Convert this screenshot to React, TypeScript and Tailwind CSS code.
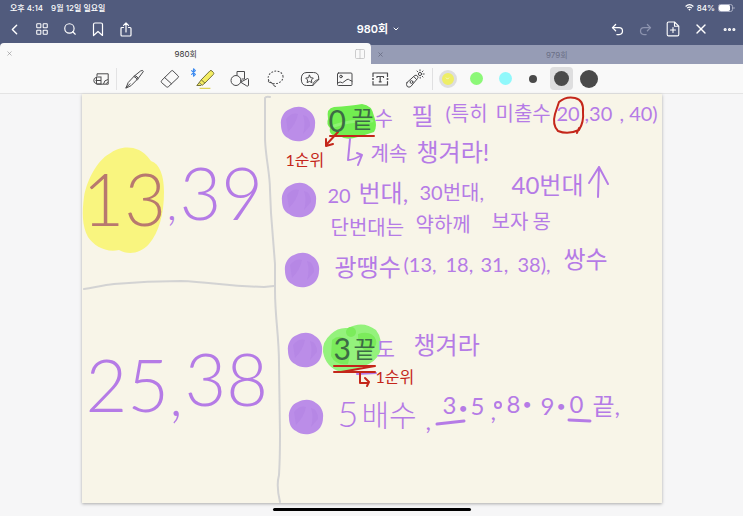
import type { ReactNode } from "react";
import {
  Bluetooth,
  ChevronDown,
  ChevronLeft,
  Columns2,
  Ellipsis,
  LayoutGrid,
  Redo2,
  Search,
  Undo2,
  X,
} from "lucide-react";

interface Note {
  text: string;
  className: string;
}

const INK = "#b57be6";
const RED = "#c4261a";

// handwritten notes, placed freely on the sheet
const notes: Note[] = [
  { text: "13", className: "left-[1px] top-[68px] text-7xl font-light text-[#b8786f]" },
  { text: ",", className: "left-[85px] top-[84px] text-5xl font-light" },
  { text: "39", className: "left-[98px] top-[62px] text-7xl font-light" },
  { text: "25", className: "left-[4px] top-[254px] text-7xl font-light" },
  { text: ",", className: "left-[88px] top-[269px] text-6xl font-light" },
  { text: "38", className: "left-[103px] top-[248px] text-7xl font-light" },

  { text: "0", className: "left-[247px] top-[11px] text-3xl text-[#3d6b45]" },
  { text: "끝", className: "left-[270px] top-[13px] text-2xl text-[#3d6b45]" },
  { text: "수", className: "left-[293px] top-[14px] text-xl" },
  { text: "필", className: "left-[330px] top-[10px] text-2xl" },
  { text: "(특히", className: "left-[364px] top-[9px] text-xl" },
  { text: "미출수", className: "left-[414px] top-[9px] text-xl" },
  { text: "20", className: "left-[475px] top-[9px] text-xl" },
  { text: ",30", className: "left-[503px] top-[9px] text-xl" },
  { text: ", 40)", className: "left-[538px] top-[9px] text-xl" },

  { text: "1순위", className: "left-[204px] top-[58px] text-base text-[#c4261a]" },
  { text: "계속", className: "left-[289px] top-[49px] text-xl" },
  { text: "챙겨라!", className: "left-[335px] top-[46px] text-2xl" },

  { text: "20", className: "left-[246px] top-[91px] text-xl" },
  { text: "번대,", className: "left-[277px] top-[87px] text-2xl" },
  { text: "30번대,", className: "left-[338px] top-[88px] text-xl" },
  { text: "40번대", className: "left-[430px] top-[79px] text-2xl" },

  { text: "단번대는", className: "left-[249px] top-[123px] text-xl" },
  { text: "약하께", className: "left-[334px] top-[120px] text-xl" },
  { text: "보자", className: "left-[410px] top-[117px] text-xl" },
  { text: "몽", className: "left-[451px] top-[117px] text-xl" },

  { text: "광땡수", className: "left-[253px] top-[161px] text-2xl" },
  { text: "(13,", className: "left-[322px] top-[160px] text-xl" },
  { text: "18,", className: "left-[364px] top-[160px] text-xl" },
  { text: "31,", className: "left-[399px] top-[160px] text-xl" },
  { text: "38),", className: "left-[436px] top-[160px] text-xl" },
  { text: "쌍수", className: "left-[482px] top-[153px] text-2xl" },

  { text: "3", className: "left-[252px] top-[239px] text-3xl text-[#3d6b45]" },
  { text: "끝", className: "left-[272px] top-[243px] text-2xl text-[#3d6b45]" },
  { text: "도", className: "left-[295px] top-[245px] text-xl" },
  { text: "챙겨라", className: "left-[332px] top-[239px] text-2xl" },
  { text: "1순위", className: "left-[294px] top-[275px] text-base text-[#c4261a]" },

  { text: "5", className: "left-[256px] top-[301px] text-4xl font-light" },
  { text: "배수", className: "left-[280px] top-[305px] text-3xl font-light" },
  { text: ",", className: "left-[344px] top-[315px] text-2xl" },
  { text: "3", className: "left-[361px] top-[299px] text-2xl" },
  { text: "•", className: "left-[377px] top-[306px] text-base" },
  { text: "5", className: "left-[389px] top-[300px] text-2xl" },
  { text: ",", className: "left-[409px] top-[305px] text-2xl" },
  { text: "8", className: "left-[425px] top-[298px] text-2xl" },
  { text: "•", className: "left-[441px] top-[302px] text-base" },
  { text: "9", className: "left-[459px] top-[300px] text-2xl" },
  { text: "•", className: "left-[475px] top-[304px] text-base" },
  { text: "0", className: "left-[488px] top-[298px] text-2xl" },
  { text: "끝,", className: "left-[511px] top-[300px] text-2xl" },
];

const bullets = [
  [216, 30],
  [217, 106],
  [220, 176],
  [223, 256],
  [224, 323],
];

function NavButton({ label, children }: { label: string; children: ReactNode }) {
  return (
    <button aria-label={label} className="flex h-7 w-7 items-center justify-center">
      {children}
    </button>
  );
}

function Tool({ label, children }: { label: string; children: ReactNode }) {
  return (
    <button aria-label={label} className="flex h-7 w-[35px] items-center justify-center">
      <svg
        viewBox="0 0 20 20"
        className="h-5 w-5 overflow-visible"
        fill="none"
        stroke="#4a4a4c"
        strokeWidth="1"
        strokeLinecap="round"
        strokeLinejoin="round"
      >
        {children}
      </svg>
    </button>
  );
}

function StatusBar() {
  return (
    <div className="flex h-[15px] items-center justify-between pl-[10px] pr-2 text-[8px] leading-none font-medium">
      <div className="flex gap-2">
        <span>오후 4:14</span>
        <span>9월 12일 일요일</span>
      </div>
      <div className="flex items-center gap-[3px]">
        <svg viewBox="0 0 12 9" className="h-[7px] w-[9px]" fill="none" stroke="white" strokeWidth="1.6">
          <path d="M.8 3.2C4 .2 8 .2 11.2 3.2M2.8 5.3c2-1.7 4.4-1.7 6.4 0" />
          <path d="M6 8.7 4.3 6.8q1.7-1.3 3.4 0Z" fill="white" stroke="none" />
        </svg>
        <span>84%</span>
        <svg viewBox="0 0 17 8" className="h-2 w-[17px]">
          <rect x=".5" y=".5" width="14" height="7" rx="2" fill="none" stroke="#a9aec3" />
          <rect x="1" y="1" width="11" height="6" rx="1.4" fill="white" />
          <path d="M15.5 2.8v2.4q1.2-.5 1.2-1.2t-1.2-1.2Z" fill="#a9aec3" />
        </svg>
      </div>
    </div>
  );
}

function NavBar() {
  return (
    <nav className="grid h-7 grid-cols-[1fr_auto_1fr] items-center">
      <div className="flex">
        <NavButton label="Back">
          <ChevronLeft size={17} strokeWidth={2} />
        </NavButton>
        <NavButton label="Thumbnails">
          <LayoutGrid size={14} strokeWidth={1.8} />
        </NavButton>
        <NavButton label="Search">
          <Search size={14} strokeWidth={2} />
        </NavButton>
        <NavButton label="Bookmark">
          <svg viewBox="0 0 12 15" className="h-[15px] w-3" fill="none" stroke="white" strokeWidth="1.2" strokeLinejoin="round">
            <path d="M1.5 13.5V2.5Q1.5 1 3 1H9Q10.5 1 10.5 2.5V13.5L6 9.5Z" />
          </svg>
        </NavButton>
        <NavButton label="Share">
          <svg viewBox="0 0 12 15" className="h-[15px] w-3" fill="none" stroke="white" strokeWidth="1.2" strokeLinecap="round" strokeLinejoin="round">
            <path d="M3.5 5.5H2Q1 5.5 1 6.5V13Q1 14 2 14H10Q11 14 11 13V6.5Q11 5.5 10 5.5H8.5M6 10V1M3.5 3.3 6 .8 8.5 3.3" />
          </svg>
        </NavButton>
      </div>
      <button className="flex items-center gap-1 pl-[14px] text-[11px] leading-none font-semibold">
        980회
        <ChevronDown size={8} strokeWidth={3} />
      </button>
      <div className="flex justify-end">
        <NavButton label="Undo">
          <Undo2 size={15} strokeWidth={2} />
        </NavButton>
        <NavButton label="Redo">
          <Redo2 size={15} strokeWidth={2} className="text-[#8d94af]" />
        </NavButton>
        <NavButton label="Add page">
          <svg viewBox="0 0 14 16" className="h-4 w-[14px]" fill="none" stroke="white" strokeWidth="1.1" strokeLinecap="round" strokeLinejoin="round">
            <path d="M8.5 1H2.5Q1.2 1 1.2 2.3V13.5Q1.2 14.9 2.5 14.9H11.5Q12.8 14.9 12.8 13.5V5.2L8.5 1V5.2H12.8M7 6.5V11.5M4.5 9H9.5" />
          </svg>
        </NavButton>
        <NavButton label="Close editing">
          <X size={16} strokeWidth={2} />
        </NavButton>
        <NavButton label="More">
          <Ellipsis size={15} strokeWidth={3} />
        </NavButton>
      </div>
    </nav>
  );
}

function Tabs() {
  return (
    <div className="flex h-[21px] text-[8px] leading-none">
      <div className="flex flex-1 items-center justify-between rounded-t bg-[#f9f9f9] pl-[6px] pr-1 text-[#333]">
        <button aria-label="Close 980회">
          <X size={7} className="text-[#8b8b8d]" />
        </button>
        <button className="pl-1">980회</button>
        <button aria-label="Split view">
          <Columns2 size={12} strokeWidth={1.5} className="text-[#bcbcbe]" />
        </button>
      </div>
      <div className="mt-[2px] flex flex-1 items-center justify-between bg-[#969cb5] px-[6px] text-[#6a6f86]">
        <button aria-label="Close 979회">
          <X size={7} strokeWidth={3} />
        </button>
        <button>979회</button>
        <span className="w-[7px]" />
      </div>
    </div>
  );
}

function Toolbar() {
  return (
    <div className="flex h-[30px] items-center border-b border-[#e4e4e4] bg-[#f9f9f9] pl-[85px]">
      <button aria-label="Zoom window" className="flex h-[22px] w-8 items-center justify-center border-r border-[#e3e3e4]">
        <svg viewBox="0 0 16 12" className="h-3 w-4" fill="none" stroke="#4a4a4c">
          <path d="M4 3V.8H15.2V11.2H4M15 6.5Q11 7 10.5 11M13 10.8 15 8.8" />
          <rect x="3.5" y="4" width="4.5" height="7" />
          <path d="M3 4.5Q.8 5 .8 7.5T3 10.5M2.5 7.5H8" />
        </svg>
      </button>
      <Tool label="Pen">
        <path d="M1 18.8 3.2 13.5Q9 6.5 15.5 2Q18.2.6 18.3 2.6Q14.5 9 6.2 16.5ZM10 6.6Q12.8 7.4 13.3 9.8M9 7.5Q11.8 8.4 12.2 10.8M1 18.8 5 14.8" />
      </Tool>
      <Tool label="Eraser">
        <path d="M11.5 1.8Q12.2 1.1 12.9 1.8L18.2 7Q18.9 7.8 18.2 8.5L8.3 17.8Q7.4 18.5 6.5 17.8L1.5 13.5Q.8 12.6 1.5 11.7ZM4.6 8.5 11.5 14.8" />
      </Tool>
      <Tool label="Highlighter">
        <path d="M6.5 10.5 15 1.8Q16 1 17 2L18.5 3.6Q19.2 4.6 18.3 5.5L10.2 13.8ZM6.5 10.5 4.2 13.6 7.2 16.3 10.2 13.8M4.2 13.6 1.8 16.5 5.8 16.5" fill="#f4ed63" stroke="#77733b" />
        <path d="M5 19.3H15" stroke="#d8c92e" />
        <Bluetooth x={-6} y={-1} width={9} height={9} stroke="#3d8bf0" strokeWidth={3} />
      </Tool>
      <Tool label="Shapes">
        <path d="M7 6.2V2.5H14.5V10H12" />
        <circle cx="6" cy="11.5" r="5" />
        <path d="M11 13 17.5 9.5Q18.5 9.5 18.5 10.5V16.5Q18.2 17.5 17 17Z" fill="#f9f9f9" />
      </Tool>
      <Tool label="Lasso">
        <ellipse cx="10.5" cy="8.5" rx="7.5" ry="6.2" strokeDasharray="1.8 1.4" strokeLinecap="butt" transform="rotate(-12 10 8)" />
        <path d="M5.8 13.5Q2.5 13.8 3.5 11.5M5.5 13.5Q8 14 8.2 15.5T10.5 17.5" />
      </Tool>
      <Tool label="Elements">
        <path d="M6.5 3.5H13.5Q18.7 3.5 18.7 9V10.5L12.8 16.5H6.5Q1.3 16.5 1.3 10T6.5 3.5M12.8 16.5Q13 11.5 18.7 10.5" />
        <path d="M9.5 6.2 10.7 8.7 13.3 9.1 11.4 11 11.9 13.7 9.5 12.4 7.1 13.7 7.6 11 5.7 9.1 8.3 8.7Z" />
      </Tool>
      <Tool label="Image">
        <rect x="2.5" y="4" width="14.5" height="12.5" rx="1" />
        <circle cx="6" cy="7.5" r="1.3" />
        <path d="M2.5 14Q5.5 12 7.5 13.8L12 10.5Q13.5 9.8 14.5 11L17 12.2" />
      </Tool>
      <Tool label="Text">
        <path d="M3 7.5V4H17.5V7.5M3 12.5V16H17.5V12.5M7 8.5V7.5H13.5V8.5M10.2 7.5V12.8M9.2 12.8H11.2" strokeWidth="1.2" />
        <circle cx="3" cy="10" r="1" fill="#4a4a4c" stroke="none" />
        <circle cx="17.5" cy="10" r="1" fill="#4a4a4c" stroke="none" />
      </Tool>
      <Tool label="Laser pointer">
        <path d="M2 13.5 9.8 6.5Q11.2 5.7 12.5 7Q13.7 8.3 12.5 9.5L5.8 17.5Q4 18.9 2.2 17.5Q.8 15.5 2 13.5ZM8.8 7.5 11.5 10.5" />
        <circle cx="6.5" cy="13" r="1.4" />
        <circle cx="15" cy="5" r="1.6" />
        <path d="M15 .8V1.8M18 2 17.3 2.7M19.2 5H18.2M18 8 17.3 7.3M12 2 12.7 2.7M15.2 8.3V9.2" />
      </Tool>
      <div className="flex h-[22px] items-center border-l border-[#e0e0e1]">
        <button aria-label="Yellow" className="flex h-7 w-[29px] items-center justify-center">
          <span className="flex h-[18px] w-[18px] items-center justify-center rounded-full border-[3px] border-[#dededf] bg-[#eeee66] text-white">
            <ChevronDown size={5} strokeWidth={3} />
          </span>
        </button>
        <button aria-label="Green" className="flex h-7 w-[29px] items-center justify-center">
          <span className="h-[13px] w-[13px] rounded-full bg-[#8cf878]" />
        </button>
        <button aria-label="Cyan" className="flex h-7 w-7 items-center justify-center">
          <span className="h-[13px] w-[13px] rounded-full bg-[#90f8fb]" />
        </button>
        <button aria-label="Thin" className="flex h-7 w-7 items-center justify-center">
          <span className="h-2 w-2 rounded-full bg-[#4a4a4a]" />
        </button>
        <button aria-label="Medium" className="flex h-7 w-7 items-center justify-center">
          <span className="flex h-[23px] w-[23px] items-center justify-center rounded bg-[#dededf]">
            <span className="h-[15px] w-[15px] rounded-full bg-[#4a4a4a]" />
          </span>
        </button>
        <button aria-label="Thick" className="flex h-7 w-7 items-center justify-center">
          <span className="h-[18px] w-[18px] rounded-full bg-[#4a4a4a]" />
        </button>
      </div>
    </div>
  );
}

// highlights, rules, bullets and arrows under the notes
function Drawing() {
  return (
    <svg viewBox="0 0 580 409" className="absolute inset-0 h-full w-full" fill="none" strokeLinecap="round" strokeLinejoin="round">
      <g stroke="#d3d3d3" strokeWidth="2">
        <path d="M188 3Q184 2 183 4V46C184 66 188 80 188 96L189 119L193 170V196C193 225 197 240 197 270L198 340Q198 365 197 381Q194 392 198 408" />
        <path d="M2 195C14 193 22 191 32 190Q66 187 99 187C128 188 145 192 182 193L192 192" />
      </g>

      <path d="M2 103C5 85 16 66 27 60C35 54 46 51 57 56C63 59 66 63 69 67C78 70 82 82 82 98C82 120 77 138 67 150C58 160 46 161 37 156C24 159 12 152 6 143C0 132 0 118 2 103Z" fill="#f9f57f" />

      <path d="M246 25Q244 14 252 13Q268 12 280 10Q290 11 292 22Q296 32 292 38Q283 41 276 43Q264 47 258 42Q246 42 248 34Q244 30 246 25Z" fill="#72ee50" />
      <path d="M252 32Q270 26 290 27" stroke="#8df372" strokeWidth="3" />
      <path d="M241 258Q240 248 249 240Q256 233 266 234Q281 226 294 236Q301 245 298 258Q294 268 282 272Q270 279 259 278Q244 274 241 258Z" fill="#94f27c" />
      <path d="M250 246Q257 240 264 245Q270 258 266 270Q254 272 249 262ZM276 240Q290 236 294 246Q296 254 284 258Q275 250 276 240Z" fill="#7bec5b" />
      <circle cx="269" cy="238" r="5" fill="#7bec5b" />

      {bullets.map(([x, y]) => (
        <g key={y} transform={`translate(${x} ${y})`}>
          <path d="M-17 1C-18-6-14-13-8-15C-2-18 5-18 10-14C15-11 18-5 17 1C17 8 13 14 7 16C2 18-5 18-10 14C-15 12-17 6-17 1Z" fill="#bb8de8" />
          <path d="M-12-5Q-6-12 0-10Q-2 0-10 8ZM5-9Q12-8 12 2L5 10Q8 0 5-9Z" fill="#b687e5" />
        </g>
      ))}

      <g stroke={INK} strokeWidth="2">
        <path d="M268 45 266 66Q271 66 278 62M275 59 280 61 276 71" />
        <path d="M516 103 517 73M507 89 517 73 526 90" />
        <path d="M275 280 294 279" />
        <circle cx="416" cy="311" r="3" />
        <path d="M355 330 382 327M487 326 508 327" strokeWidth="3" />
      </g>

      <g stroke={RED} strokeWidth="2">
        <path d="M248 42H292M256 38 244 51M244 45V52L251 50" />
        <path d="M477 8Q484 2 493 4Q502 6 501 18Q502 28 497 36Q486 41 476 37Q470 31 473 20ZM497 34 495 39" />
        <path d="M252 272H293L259 278M252 278H293" />
        <path d="M278 279V289H286M283 284 287 288 285 292" />
      </g>
    </svg>
  );
}

function Sheet() {
  return (
    <section className="relative mx-auto h-[409px] w-[580px] overflow-hidden bg-[#f8f5e8] font-['Lato','Noto_Sans_CJK_KR',sans-serif] text-[#b57be6] shadow-[0_1px_3px_#aaa]">
      <Drawing />
      {notes.map((note, index) => (
        <span key={index} className={`absolute leading-none whitespace-nowrap ${note.className}`}>
          {note.text}
        </span>
      ))}
    </section>
  );
}

export default function App() {
  return (
    <div className="flex min-h-screen flex-col bg-[#f6f6f7] font-['Inter','Noto_Sans_CJK_KR',sans-serif]">
      <header className="bg-[#515b7d] text-white">
        <StatusBar />
        <NavBar />
        <Tabs />
        <Toolbar />
      </header>
      <main>
        <Sheet />
      </main>
      <div className="mx-auto mt-[5px] h-[3px] w-[198px] rounded-full bg-black" />
    </div>
  );
}
